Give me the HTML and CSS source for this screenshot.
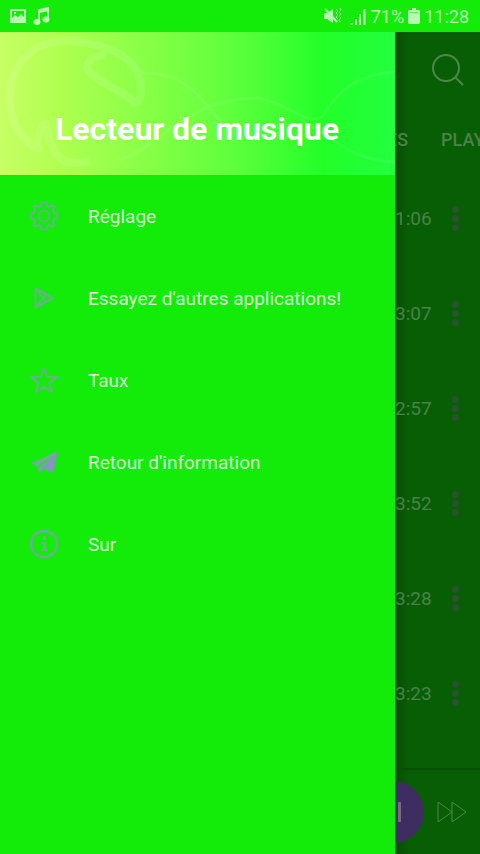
FILE: index.html
```html
<!DOCTYPE html>
<html lang="fr">
<head>
<meta charset="utf-8">
<meta name="viewport" content="width=device-width, initial-scale=1">
<title>Lecteur de musique</title>
<link rel="stylesheet" href="styles.css">
</head>
<body>
<header class="status">
  <svg width="16" height="16" viewBox="0 0 16 16"><path fill="currentColor" fill-rule="evenodd" d="M0 1h16v14H0zM2 3v10h12V3zM2 12v-2l3-3 3 2 3-3 3 3v4H2zM4 4h2v2H4z"/></svg>
  <svg width="18" height="18" viewBox="0 0 18 18"><path d="M6 14V3L15 1v11M6 5l9-2" fill="none" stroke="currentColor" stroke-width="2"/><ellipse cx="4" cy="15" rx="3.500" ry="3" fill="currentColor"/><ellipse cx="13" cy="12.500" rx="3.500" ry="3" fill="currentColor"/></svg>
  <div class="status-right">
    <svg width="18" height="18" viewBox="0 0 18 18"><path fill="currentColor" d="M0 6h3l6-4v14l-6-4H0z"/><path d="M1 2l12 13" fill="none" stroke="currentColor" stroke-width="2"/><path d="M12 2l2 2-2 2 2 2-2 2 2 2M16 1l1 2-2 2 2 2-2 2 2 2-2 2 1 2" fill="none" stroke="currentColor"/></svg>
    <svg class="signal" width="16" height="17" viewBox="0 0 16 17"><path d="M1.500 17v-2M6 17v-6M10 17V6M14.500 17V1" stroke="currentColor" stroke-width="2"/></svg>
    <span>71%</span>
    <svg width="12" height="16" viewBox="0 0 12 16"><path fill="currentColor" d="M4 0h4v2h3l1 1v12l-1 1H1l-1-1V3l1-1h3z"/><path d="M2 4.500h8" stroke="#5fef55"/></svg>
    <time>11:28</time>
  </div>
</header>
<main class="screen">
  <aside class="drawer">
    <div class="banner">
      <svg class="banner-art" viewBox="0 0 395 143" preserveAspectRatio="none" aria-hidden="true">
        <g fill="none" stroke="#fff" stroke-opacity=".1" stroke-linejoin="round">
          <path stroke-width="8" d="M90 129C62 137 50 122 46 92 40 94 37 104 38 117 14 104 7 80 11 54 18 20 44 7 72 9 105 13 134 22 140 48 142 60 141 69 134 71 126 58 99 54 87 36 88 27 96 23 106 23"/>
          <path stroke-width="3" stroke-opacity=".07" d="M142 41C185 39 200 66 222 91M120 128C165 110 190 65 258 66 292 72 305 94 322 85 340 55 360 42 395 40M300 87C325 99 350 130 395 130"/>
        </g>
      </svg>
      <h1>Lecteur de musique</h1>
    </div>
    <nav class="menu">
      <a href="#reglage"><svg viewBox="0 0 30 30"><path d="M13 1.500H17L18.500 5 20.500 6 24 4.500 25.500 6 24 9.500 25 11.500 28.500 13V17L25 18.500 24 20.500 25.500 24 24 25.500 20.500 24 18.500 25 17 28.500H13L11.500 25 9.500 24 6 25.500 4.500 24 6 20.500 5 18.500 1.500 17V13L5 11.500 6 9.500 4.500 6 6 4.500 9.500 6 11.500 5Z"/><circle cx="15" cy="15" r="5.500"/></svg>Réglage</a>
      <a href="#applications"><svg viewBox="0 0 30 30"><path d="M6.500 5.500v19L24 15zM6.500 5.500 17 19M6.500 24.500 17 11"/></svg>Essayez d'autres applications!</a>
      <a href="#taux"><svg viewBox="0 0 30 30"><path d="M15 3l3.300 8.800 9.700.3-7.600 6 2.600 9-8-5.200-8 5.200 2.600-9-7.600-6 9.700-.3z"/></svg>Taux</a>
      <a href="#retour"><svg viewBox="0 0 30 30"><path class="solid" d="M29 4 2 16l6 4L25 8 9 21v5l5-3z"/><path class="fold" d="M29 4 13 21l11 5z"/></svg>Retour d'information</a>
      <a href="#sur"><svg viewBox="0 0 30 30"><circle class="bold" cx="15" cy="15" r="13"/><path class="solid" d="M14 7h3v4h-3zM12 13h5v7h2v2h-7v-2h2v-5h-2z"/></svg>Sur</a>
    </nav>
  </aside>
  <section class="library">
    <div class="toolbar"><button class="search" aria-label="Rechercher"><svg width="34" height="34" viewBox="0 0 34 34"><circle cx="15" cy="15" r="13"/><path d="M24 24l8 8"/></svg></button></div>
    <div class="tabs"><span>ES</span><span>PLAY</span></div>
    <ul class="tracks">
      <li><span>1:06</span><button class="more" aria-label="Options"><i></i><i></i><i></i></button></li>
      <li><span>3:07</span><button class="more" aria-label="Options"><i></i><i></i><i></i></button></li>
      <li><span>2:57</span><button class="more" aria-label="Options"><i></i><i></i><i></i></button></li>
      <li><span>3:52</span><button class="more" aria-label="Options"><i></i><i></i><i></i></button></li>
      <li><span>3:28</span><button class="more" aria-label="Options"><i></i><i></i><i></i></button></li>
      <li><span>3:23</span><button class="more" aria-label="Options"><i></i><i></i><i></i></button></li>
    </ul>
    <div class="player">
      <button class="pause" aria-label="Pause"><i></i><i></i></button>
      <button class="next" aria-label="Suivant"><svg width="32" height="22" viewBox="0 0 32 22"><path d="M2 1v20l14-10zM16 1v20l14-10z"/></svg></button>
    </div>
  </section>
</main>
</body>
</html>
```
FILE: styles.css
```css
* { box-sizing: border-box; }
body {
  margin: 0;
  min-height: 100vh;
  display: flex;
  flex-direction: column;
  background: #13eb08;
  color: #d5fbd0;
  font-family: Roboto, "Liberation Sans", sans-serif;
}
svg { display: block; flex-shrink: 0; }
button { border: 0; padding: 0; background: none; color: inherit; }
.status {
  height: 32px;
  padding: 0 11px 0 10px;
  display: flex;
  align-items: center;
  gap: 7px;
  font-size: 18px;
  color: #b9f8b2;
}
.status-right {
  margin-left: auto;
  display: flex;
  align-items: center;
  gap: 4px;
}
.signal { margin: 0 1px 0 4px; }
.screen {
  flex: 1;
  display: grid;
  grid-template-columns: minmax(0, 1fr) 85px;
}
.banner {
  position: relative;
  height: 143px;
  padding-top: 78px;
  background: linear-gradient(90deg, #c7ff64 0, #b0ff50 15%, #8cff48 35%, #5cff3c 60%, #22ff28 82%, #22ff40 100%);
}
.banner-art {
  position: absolute;
  inset: 0;
  width: 100%;
  height: 100%;
}
h1 {
  position: relative;
  margin: 0 0 0 55px;
  font-size: 32px;
  line-height: 38px;
  font-weight: 700;
  color: #fff;
  white-space: nowrap;
}
.menu { display: flex; flex-direction: column; }
.menu a {
  height: 82px;
  padding-left: 29px;
  display: flex;
  align-items: center;
  gap: 29px;
  color: #d9fcd5;
  font-size: 19px;
  text-decoration: none;
}
.menu svg {
  width: 30px;
  height: 30px;
  fill: none;
  stroke: #62b584;
  stroke-width: 2;
  stroke-linejoin: round;
}
.menu .bold { stroke-width: 3; }
.menu .solid { fill: #6fad98; stroke: none; }
.menu .fold { fill: #8296c0; stroke: none; }
.library {
  display: flex;
  flex-direction: column;
  overflow: hidden;
  background: linear-gradient(90deg, #084d04 0, #085e04 14px);
  color: #4a8247;
}
.toolbar {
  height: 75px;
  padding-right: 15px;
  display: flex;
  align-items: center;
  justify-content: flex-end;
}
.search svg, .next svg { fill: none; stroke: #4e8749; stroke-width: 2; }
.tabs {
  height: 64px;
  display: flex;
  align-items: center;
  gap: 33px;
  margin-left: -8px;
  font-size: 18px;
  font-weight: 500;
}
.tracks { margin: 0; padding: 0; list-style: none; flex: 1; }
.tracks li {
  height: 95px;
  padding: 0 21px 0 0;
  display: flex;
  align-items: center;
  justify-content: space-between;
  font-size: 19px;
}
.more { display: grid; gap: 2px; }
.more i { width: 7px; height: 7px; border-radius: 50%; background: #27532d; }
.player {
  height: 86px;
  border-top: 2px solid #084e04;
  display: flex;
  align-items: center;
  justify-content: space-between;
  padding-right: 12px;
}
.pause {
  width: 62px;
  height: 62px;
  margin-left: -33px;
  border-radius: 50%;
  display: flex;
  align-items: center;
  justify-content: center;
  gap: 10px;
  background: #3e2d60;
}
.pause i { width: 3px; height: 20px; background: #766c80; }
.next svg { stroke-width: 1; }
```
